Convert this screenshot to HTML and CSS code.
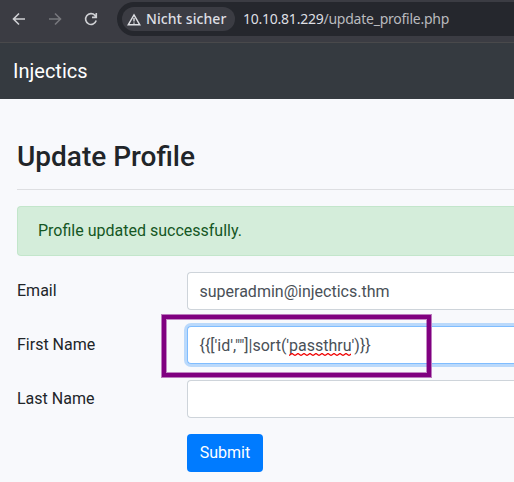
FILE: index.html
```html
<!DOCTYPE html>
<html lang="en">
<head>
<meta charset="utf-8">
<title>Update Profile</title>
<link rel="stylesheet" href="styles.css">
</head>
<body>
<div class="toolbar">
  <svg class="nav-icon" viewBox="0 0 16 16"><path d="M14 8H3M8 2.5 2.5 8 8 13.5"/></svg>
  <svg class="nav-icon dim" viewBox="0 0 16 16"><path d="M2 8h11M8 2.5 13.5 8 8 13.5"/></svg>
  <svg class="nav-icon" viewBox="0 0 16 16"><path d="M13.2 9.6A5.4 5.4 0 1 1 12 4.4L13.3 6M13.3 2v4.4H9"/></svg>
  <div class="address">
    <span class="chip">
      <svg class="warn" viewBox="0 0 14 13"><path d="M7 1.8 12.8 11.8H1.2Z"/><path d="M7 5v3.6M7 9.4v1.3"/></svg>
      <span class="chip-text">Nicht sicher</span>
    </span>
    <span class="url"><span class="host">10.10.81.229</span><span class="path">/update_profile.php</span></span>
  </div>
</div>
<nav class="navbar">Injectics</nav>
<main class="content">
  <h1>Update Profile</h1>
  <div class="alert">Profile updated successfully.</div>
  <div class="row"><span class="label">Email</span><div class="control">superadmin@injectics.thm</div></div>
  <div class="row">
    <span class="label">First Name</span>
    <div class="control focused">{{['id',""]|sort('<span class="misspelled">passthru<svg class="squiggle" viewBox="0 0 62 3"><defs><pattern id="wave" width="6" height="3" patternUnits="userSpaceOnUse"><path d="M0 2.5 3 .5 6 2.5"/></pattern></defs><rect width="62" height="3" fill="url(#wave)" stroke="none"/></svg></span>')}}</div>
    <div class="marker"></div>
  </div>
  <div class="row"><span class="label">Last Name</span><div class="control"></div></div>
  <button class="submit" type="button">Submit</button>
</main>
</body>
</html>
```
FILE: styles.css
```css
* { box-sizing: border-box; }
body {
  margin: 0;
  height: 482px;
  overflow: hidden;
  background: #f8f9fc;
  color: #212529;
  font: 16px/24px Roboto, "Liberation Sans", sans-serif;
}
.toolbar {
  display: flex;
  align-items: flex-start;
  height: 43px;
  padding: 2px 0 0 11px;
  background: #3b3c43;
  border-bottom: 1px solid #49494b;
}
.nav-icon {
  flex: none;
  width: 16px;
  height: 16px;
  margin: 9px 20px 0 0;
  fill: none;
  stroke: #cfd0d4;
  stroke-width: 1.6;
}
.nav-icon.dim { stroke: #77787d; }
.address {
  display: flex;
  align-items: center;
  flex: 1;
  height: 34px;
  margin-left: -2px;
  padding-left: 5px;
  border-radius: 17px 0 0 17px;
  background: #25272d;
  font-family: "Noto Sans", "Open Sans", sans-serif;
  white-space: nowrap;
}
.chip {
  display: flex;
  align-items: center;
  width: 113px;
  height: 24px;
  padding-left: 5px;
  border-radius: 12px;
  background: #3b3c43;
  color: #dedfe3;
}
.warn {
  flex: none;
  width: 14px;
  height: 13px;
  margin-right: 5px;
  fill: none;
  stroke: #dedfe3;
  stroke-width: 1.4;
}
.chip-text { font-size: 14px; font-weight: 500; letter-spacing: .08px; }
.url { margin-left: 8px; font-size: 14px; letter-spacing: -.24px; }
.host { color: #dedfe3; }
.path { color: #b9babe; }
.navbar {
  height: 56px;
  padding: 13px;
  background: #353a40;
  color: #fff;
  font-size: 20px;
  line-height: 30px;
}
.content { padding: 40px 0 0 17px; }
h1 {
  margin: 0 0 16px;
  padding: 1px 0 15px;
  border-bottom: 1px solid #dedfe2;
  font-size: 28px;
  font-weight: 500;
  line-height: 34px;
}
.alert {
  height: 50px;
  margin-bottom: 16px;
  padding: 12px 20px;
  border: 1px solid #c3e6cb;
  border-right: 0;
  border-radius: 4px 0 0 4px;
  background: #d4edda;
  color: #155724;
}
.row {
  position: relative;
  display: flex;
  margin-bottom: 16px;
}
.label { flex: none; width: 170px; padding-top: 7px; }
.control {
  flex: 1;
  height: 38px;
  padding: 7px 0 5px 11.5px;
  border: 1px solid #ced4da;
  border-right: 0;
  border-radius: 4px 0 0 4px;
  background: #fff;
  color: #495057;
}
.focused { border-color: #80bdff; box-shadow: 0 0 0 3px #bad9fb; }
.misspelled { position: relative; }
.squiggle {
  position: absolute;
  left: 0;
  bottom: -1px;
  width: 62px;
  height: 3px;
  fill: none;
  stroke: #f00000;
  stroke-width: 1.3;
}
.marker {
  position: absolute;
  left: 144px;
  top: -12px;
  width: 271px;
  height: 64px;
  border: 5px solid #800080;
  outline: 1px solid #bc7bbe;
  outline-offset: -1px;
  box-shadow: inset 0 0 0 1px rgba(128, 0, 128, .45);
}
.submit {
  display: block;
  width: 76px;
  height: 38px;
  margin-left: 170px;
  padding: 0;
  border: 0;
  border-radius: 4px;
  background: #007bff;
  color: #fff;
  font: inherit;
}
```
